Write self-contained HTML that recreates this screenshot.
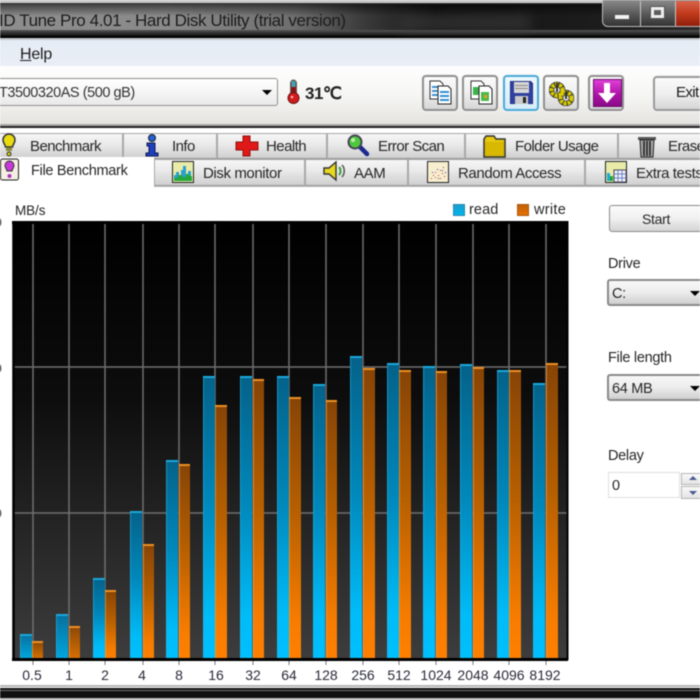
<!DOCTYPE html>
<html><head><meta charset="utf-8">
<style>
html,body{margin:0;padding:0;background:#fff}
#r{position:relative;width:700px;height:700px;overflow:hidden;background:#fff;font-family:"Liberation Sans",sans-serif;color:#222;font-size:15px;filter:blur(.45px)}
.a{position:absolute}
.t{position:absolute;white-space:nowrap;line-height:18px;font-size:15px;color:#262626;letter-spacing:-.55px}
.t2{letter-spacing:-.4px}
.tab{position:absolute;box-sizing:border-box;background:linear-gradient(#f6f6f6,#e9e9e9 45%,#cfcfcf);border:1px solid #a8a8a8;border-bottom:1px solid #999}
.btn{position:absolute;box-sizing:border-box;top:75px;width:36px;height:36px;border:2px solid #8f8f8f;border-radius:4px;background:linear-gradient(#fbfbfb,#efefef 50%,#d6d6d6);box-shadow:0 0 0 1px #f4f4f4}
.combo{position:absolute;box-sizing:border-box;border:2px solid #8a8a8a;border-radius:3px;background:linear-gradient(#f8f8f8,#ececec 50%,#cfcfcf)}
.arr{position:absolute;width:0;height:0;border-left:5px solid transparent;border-right:5px solid transparent;border-top:5px solid #000}
</style></head><body><div id="r">

<!-- title bar -->
<div class="a" style="left:0;top:0;width:700px;height:38px;background:linear-gradient(90deg,#8d8d8d 0,#8a8a8a 24%,#6e6e6e 42%,#3a3a3a 52%,#151515 62%,#1c1c1c 85%,#2a2a2a 100%)"></div>
<div class="a" style="left:0;top:4px;width:700px;height:12px;background:linear-gradient(rgba(0,0,0,.55),rgba(0,0,0,0))"></div>
<div class="a" style="left:0;top:0;width:700px;height:3px;background:#c9c9c9"></div>
<div class="a" style="left:0;top:3px;width:700px;height:1px;background:#333"></div>
<div class="a" style="left:0;top:30px;width:700px;height:6px;background:linear-gradient(#555,#111)"></div>
<div class="a" style="left:0;top:36px;width:700px;height:2px;background:#000"></div>
<div class="a" style="left:0;top:38px;width:700px;height:2px;background:#c4c8cc"></div>
<div class="a" style="left:400px;top:16px;width:130px;height:14px;background:#3c3c3c;filter:blur(6px);opacity:.7"></div>
<div class="t" style="left:-1px;top:11px;font-size:17px;line-height:20px;color:#1c1c1c;letter-spacing:-.4px">ID Tune Pro 4.01 - Hard Disk Utility (trial version)</div>
<!-- window buttons -->
<div class="a" style="left:602px;top:0;width:98px;height:27px;box-sizing:border-box;border:1px solid #bdbdbd;border-top:0;border-radius:0 0 0 6px;background:linear-gradient(#8b8b8b,#5d5d5d 50%,#333)"></div>
<div class="a" style="left:640px;top:1px;width:1px;height:25px;background:#c8c8c8"></div>
<div class="a" style="left:675px;top:1px;width:1px;height:25px;background:#c8c8c8"></div>
<div class="a" style="left:676px;top:1px;width:24px;height:25px;background:linear-gradient(#d8654c,#c23a1c 50%,#8e1f0a)"></div>
<div class="a" style="left:615px;top:15px;width:14px;height:4px;background:#f2f2f2"></div>
<div class="a" style="left:651px;top:7px;width:13px;height:11px;box-sizing:border-box;border:3px solid #eee;outline:1px solid #555"></div>

<!-- menu -->
<div class="a" style="left:0;top:40px;width:700px;height:26px;background:linear-gradient(#e6ecf5,#e9eef6)"></div>
<div class="t" style="left:20px;top:45px;font-size:16px;line-height:19px;color:#1c1c1c;letter-spacing:-.2px"><u>H</u>elp</div>

<!-- toolbar -->
<div class="a" style="left:0;top:66px;width:700px;height:58px;background:linear-gradient(#fefefe,#f6f6f4 50%,#e4e3df)"></div>
<div class="a" style="left:0;top:124px;width:700px;height:2px;background:#a9a9a9"></div>
<div class="a" style="left:0;top:126px;width:700px;height:2px;background:#222"></div>
<div class="a" style="left:0;top:128px;width:700px;height:572px;background:#fff"></div>
<div class="a" style="left:-4px;top:78px;width:282px;height:28px;box-sizing:border-box;border:1px solid #8f8f8f;border-radius:3px;background:linear-gradient(#fff,#f5f5f5 50%,#e9e9e9)"></div>
<div class="t" style="left:-1px;top:84px;font-size:14.5px;color:#333;letter-spacing:-.45px">T3500320AS (500 gB)</div>
<div class="arr" style="left:262px;top:90px"></div>
<!-- thermometer -->
<svg class="a" style="left:286px;top:79px" width="16" height="26" viewBox="0 0 16 26"><rect x="4.500" y="1" width="6" height="18" rx="3" fill="#8a1414" stroke="#666"/><rect x="5.500" y="2" width="4" height="6" fill="#3aa6b5"/><circle cx="7.500" cy="19" r="5.500" fill="#d31c1c" stroke="#6a1010"/><circle cx="6" cy="18" r="1.300" fill="#f6b0b0"/></svg>
<div class="t" style="left:305px;top:85px;font-size:17px;font-weight:bold;color:#222;letter-spacing:-.5px">31℃</div>

<!-- toolbar buttons -->
<div class="btn" style="left:422px"></div>
<div class="btn" style="left:462px"></div>
<div class="btn" style="left:503px;border-color:#4aa9d8;background:linear-gradient(#eef8fd,#d5ecf8)"></div>
<div class="btn" style="left:543px"></div>
<div class="btn" style="left:588px"></div>
<div class="btn" style="left:653px;width:60px;height:35px;top:76px;border-width:2px;border-color:#999"></div>
<div class="t" style="left:676px;top:84px;font-size:15px;color:#1a1a1a;letter-spacing:-.6px">Exit</div>
<svg class="a" style="left:429px;top:80px" width="24" height="26" viewBox="0 0 24 26">
<path d="M1 1h10l3 3v15H1z" fill="#fff" stroke="#333"/><rect x="3" y="6" width="7" height="2" fill="#3a8fd0"/><rect x="3" y="10" width="7" height="2" fill="#3a8fd0"/><rect x="3" y="14" width="7" height="2" fill="#3a8fd0"/>
<path d="M9 6h10l3 3v15H9z" fill="#fff" stroke="#222"/><rect x="11" y="11" width="9" height="2" fill="#2f8fd6"/><rect x="11" y="15" width="9" height="2" fill="#2f8fd6"/><rect x="11" y="19" width="9" height="2" fill="#2f8fd6"/></svg>
<svg class="a" style="left:470px;top:80px" width="24" height="26" viewBox="0 0 24 26">
<path d="M1 1h10l3 3v15H1z" fill="#fff" stroke="#333"/><rect x="3" y="7" width="8" height="8" fill="#39b54a"/>
<path d="M9 6h10l3 3v15H9z" fill="#fff" stroke="#222"/><rect x="11" y="12" width="8" height="9" fill="#4db84a"/><rect x="14" y="15" width="3" height="3" fill="#e8a028"/></svg>
<svg class="a" style="left:510px;top:81px" width="23" height="23" viewBox="0 0 23 23"><path d="M0 0h20l3 3v20H0z" fill="#2f3f9e" stroke="#1a2266"/><rect x="4" y="1" width="15" height="11" fill="#d8d8d8"/><rect x="5" y="4" width="13" height="1" fill="#888"/><rect x="5" y="7" width="13" height="1" fill="#888"/><rect x="5" y="15" width="13" height="8" fill="#c9c9c9"/><rect x="13" y="16" width="3" height="6" fill="#222"/></svg>
<svg class="a" style="left:549px;top:81px" width="25" height="25" viewBox="0 0 25 25"><circle cx="8" cy="9" r="5.500" fill="none" stroke="#333" stroke-width="5.500"/><circle cx="17" cy="17" r="5.500" fill="none" stroke="#333" stroke-width="5.500"/><circle cx="8" cy="9" r="5.500" fill="none" stroke="#d8cc00" stroke-width="4" stroke-dasharray="3 1"/><circle cx="17" cy="17" r="5.500" fill="none" stroke="#d8cc00" stroke-width="4" stroke-dasharray="3 1"/><path d="M8 2v9M17 10v8" stroke="#333" stroke-width="2"/></svg>
<div class="a" style="left:593px;top:79px;width:29px;height:28px;box-sizing:border-box;border:1px solid #6a0c6a;background:linear-gradient(#e040d8,#b012a8 55%,#8a0a88)"></div>
<svg class="a" style="left:596px;top:82px" width="22" height="22" viewBox="0 0 22 22"><path d="M8 1h6v10h6L11 21 2 11h6z" fill="#fff"/></svg>

<!-- tab row 1 -->
<div class="tab" style="left:-2px;top:133px;width:125px;height:26px"></div>
<div class="tab" style="left:123px;top:133px;width:94px;height:26px"></div>
<div class="tab" style="left:217px;top:133px;width:110px;height:26px"></div>
<div class="tab" style="left:327px;top:133px;width:138px;height:26px"></div>
<div class="tab" style="left:465px;top:133px;width:153px;height:26px"></div>
<div class="tab" style="left:618px;top:133px;width:90px;height:26px"></div>
<div class="t" style="left:30px;top:138px">Benchmark</div>
<div class="t" style="left:172px;top:138px">Info</div>
<div class="t" style="left:266px;top:138px">Health</div>
<div class="t" style="left:378px;top:138px">Error Scan</div>
<div class="t" style="left:515px;top:138px">Folder Usage</div>
<div class="t" style="left:668px;top:138px">Erase</div>
<!-- row 1 icons -->
<svg class="a" style="left:2px;top:133px" width="16" height="24" viewBox="0 0 16 24"><path d="M7 1a6 6 0 0 1 6 6c0 3-2 4-2.500 7h-7C3 11 1 10 1 7a6 6 0 0 1 6-6z" fill="#e8dc10" stroke="#333" stroke-width="1.500"/><rect x="4" y="15" width="6" height="3" fill="#8a8a30"/><circle cx="7" cy="21" r="2" fill="#d8c810" stroke="#333"/></svg>
<svg class="a" style="left:144px;top:134px" width="16" height="24" viewBox="0 0 16 24"><circle cx="8" cy="4" r="3.500" fill="#2a5fd0" stroke="#123"/><path d="M3 9h8v10h3v3H2v-3h3v-7H3z" fill="#1f3fc0" stroke="#0a1a50"/></svg>
<svg class="a" style="left:235px;top:135px" width="24" height="22" viewBox="0 0 24 22"><path d="M8 1h7v6h8v8h-8v6H8v-6H1V7h7z" fill="#e01818" stroke="#901010"/></svg>
<svg class="a" style="left:346px;top:133px" width="24" height="24" viewBox="0 0 24 24"><path d="M14 14l7 7" stroke="#1a2a90" stroke-width="4.500" stroke-linecap="round"/><circle cx="9" cy="9" r="6.500" fill="#4fc840" stroke="#445" stroke-width="2"/><circle cx="7" cy="7" r="2" fill="#bdf0a8"/></svg>
<svg class="a" style="left:483px;top:135px" width="24" height="23" viewBox="0 0 24 23"><path d="M1 4l2-3h8l2 3h9v18H1z" fill="#e6c80c" stroke="#333" stroke-width="1.500"/><rect x="2" y="7" width="19" height="14" fill="#d8b800"/></svg>
<svg class="a" style="left:637px;top:134px" width="20" height="24" viewBox="0 0 20 24"><rect x="1" y="3" width="18" height="3" fill="#555"/><path d="M3 6h14l-1 17H4z" fill="#a8a8a8" stroke="#222"/><path d="M7 7v15M10 7v15M13 7v15" stroke="#222" stroke-width="1.600"/></svg>

<!-- tab row 2 -->
<div class="a" style="left:0;top:186px;width:700px;height:1px;background:#b8b8b8"></div>
<div class="tab" style="left:154px;top:159px;width:151px;height:27px"></div>
<div class="tab" style="left:305px;top:159px;width:103px;height:27px"></div>
<div class="tab" style="left:408px;top:159px;width:177px;height:27px"></div>
<div class="tab" style="left:585px;top:159px;width:125px;height:27px"></div>
<div class="a" style="left:-2px;top:157px;width:156px;height:31px;background:#fff"></div>
<div class="t" style="left:31px;top:162px;font-size:14.500px;letter-spacing:-.3px">File Benchmark</div>
<div class="t t2" style="left:203px;top:165px">Disk monitor</div>
<div class="t t2" style="left:354px;top:165px">AAM</div>
<div class="t t2" style="left:458px;top:165px">Random Access</div>
<div class="t t2" style="left:636px;top:165px">Extra tests</div>
<svg class="a" style="left:0;top:158px" width="20" height="24" viewBox="0 0 20 24"><rect x=".5" y="1" width="18" height="21" rx="2" fill="#f4efe2" stroke="#222"/><path d="M9.500 3a4.500 4.500 0 0 1 4.500 4.500c0 2-1.500 3-2 5.500h-5c-.5-2.500-2-3.500-2-5.500A4.500 4.500 0 0 1 9.500 3z" fill="#c838d8" stroke="#333"/><circle cx="9.500" cy="18" r="2" fill="#b030c8"/></svg>
<svg class="a" style="left:172px;top:161px" width="22" height="22" viewBox="0 0 22 22"><rect x=".5" y=".5" width="21" height="21" fill="#e8eca8" stroke="#222"/><path d="M2 20v-6h2v-3h3v5h2v-7h2V5h3v8h2v-3h3v10z" fill="#2a9fd0"/><path d="M2 20v-3h4v-3h4v2h4v-3h3v2h3v5z" fill="#22a838"/></svg>
<svg class="a" style="left:323px;top:160px" width="24" height="22" viewBox="0 0 24 22"><path d="M1 8h5l7-6v18l-7-6H1z" fill="#e8d820" stroke="#333" stroke-width="1.400"/><path d="M16 7c2 2 2 6 0 8" fill="none" stroke="#38a038" stroke-width="2"/><path d="M19 5c3 3 3 9 0 12" fill="none" stroke="#555" stroke-width="1.500"/></svg>
<svg class="a" style="left:427px;top:161px" width="22" height="22" viewBox="0 0 22 22"><rect x=".5" y=".5" width="21" height="21" fill="#f6eecf" stroke="#222"/><path d="M4 17h1v1H4zM6 14h1v1H6zM8 16h1v1H8zM8 11h1v1H8zM11 14h1v1h-1zM13 9h1v1h-1zM15 12h1v1h-1zM16 6h1v1h-1zM13 17h1v1h-1zM17 15h1v1h-1z" fill="#d03030"/><path d="M5 11h1v1H5zM10 8h1v1h-1zM11 17h1v1h-1zM15 9h1v1h-1zM18 11h1v1h-1z" fill="#3040c0"/></svg>
<svg class="a" style="left:605px;top:161px" width="22" height="22" viewBox="0 0 22 22"><rect x=".5" y=".5" width="21" height="21" fill="#e8eca8" stroke="#222"/><path d="M2 20v-8h3v8z" fill="#1fa8d8"/><path d="M5 20v-5h3v5z" fill="#22a838"/><rect x="9" y="9" width="12" height="12" fill="#f4f4f8" stroke="#445"/><path d="M9 13h12M9 17h12M13 9v12M17 9v12" stroke="#6a80c8"/></svg>

<!-- legend -->
<div class="t" style="left:15px;top:202px;font-size:13.500px;color:#222;letter-spacing:-.1px">MB/s</div>
<div class="a" style="left:453px;top:204px;width:12px;height:12px;box-sizing:border-box;border:1px solid #2a88b0;background:linear-gradient(#1aa0d0,#00b4ec)"></div>
<div class="a" style="left:517px;top:204px;width:12px;height:12px;box-sizing:border-box;border:1px solid #a85a10;background:linear-gradient(#c06008,#e87000)"></div>
<div class="t" style="left:469px;top:201px;font-size:14.500px;letter-spacing:.1px">read</div>
<div class="t" style="left:534px;top:201px;font-size:14.500px;letter-spacing:.3px">write</div>
<div class="t" style="left:-6px;top:213px;font-size:14px;letter-spacing:0">0</div>
<div class="t" style="left:-6px;top:359px;font-size:14px;letter-spacing:0">0</div>
<div class="t" style="left:-6px;top:504px;font-size:14px;letter-spacing:0">0</div>

<!-- chart -->
<svg class="a" style="left:0;top:210px" width="600" height="480" viewBox="0 210 600 480">
<defs>
<linearGradient id="bg" x1="0" y1="0" x2="0" y2="1"><stop offset="0" stop-color="#000"/><stop offset=".4" stop-color="#0d0d0d"/><stop offset="1" stop-color="#3d3d3d"/></linearGradient>
<linearGradient id="rd" x1="0" y1="0" x2="0" y2="1"><stop offset="0" stop-color="#04628a"/><stop offset=".45" stop-color="#0088bb"/><stop offset=".85" stop-color="#00bcf8"/><stop offset="1" stop-color="#00c0ff"/></linearGradient>
<linearGradient id="wr" x1="0" y1="0" x2="0" y2="1"><stop offset="0" stop-color="#874406"/><stop offset=".45" stop-color="#b86000"/><stop offset=".85" stop-color="#f67c00"/><stop offset="1" stop-color="#ff8000"/></linearGradient>
<linearGradient id="rs" x1="0" y1="0" x2="0" y2="1"><stop offset="0" stop-color="#076f9c"/><stop offset="1" stop-color="#00a8e0"/></linearGradient>
<linearGradient id="ws" x1="0" y1="0" x2="0" y2="1"><stop offset="0" stop-color="#8a4808"/><stop offset="1" stop-color="#d87000"/></linearGradient>
</defs>
<rect x="13" y="221" width="555" height="438" fill="url(#bg)"/>
<path d="M13 367H568M13 513H568" stroke="#6f6f6f" stroke-width="1.500"/>
<path d="M33 221V659M69 221V659M105 221V659M143 221V659M179 221V659M215 221V659M253 221V659M289 221V659M326 221V659M363 221V659M399 221V659M436 221V659M473 221V659M509 221V659M546 221V659" stroke="#6f6f6f" stroke-width="1.500"/>
<g>
<rect x="20" y="634" width="12" height="25" fill="url(#rs)"/><rect x="32" y="641" width="11" height="18" fill="url(#ws)"/>
<rect x="56" y="614" width="12" height="45" fill="url(#rs)"/><rect x="69" y="626" width="11" height="33" fill="url(#ws)"/>
<rect x="93" y="578" width="12" height="81" fill="url(#rd)"/><rect x="105" y="590" width="11" height="69" fill="url(#wr)"/>
<rect x="130" y="511" width="12" height="148" fill="url(#rd)"/><rect x="143" y="544" width="11" height="115" fill="url(#wr)"/>
<rect x="166" y="460" width="12" height="199" fill="url(#rd)"/><rect x="179" y="464" width="11" height="195" fill="url(#wr)"/>
<rect x="203" y="376" width="12" height="283" fill="url(#rd)"/><rect x="215" y="405" width="12" height="254" fill="url(#wr)"/>
<rect x="240" y="376" width="12" height="283" fill="url(#rd)"/><rect x="253" y="379" width="11" height="280" fill="url(#wr)"/>
<rect x="277" y="376" width="12" height="283" fill="url(#rd)"/><rect x="289" y="397" width="12" height="262" fill="url(#wr)"/>
<rect x="313" y="384" width="12" height="275" fill="url(#rd)"/><rect x="326" y="400" width="11" height="259" fill="url(#wr)"/>
<rect x="350" y="356" width="12" height="303" fill="url(#rd)"/><rect x="363" y="368" width="12" height="291" fill="url(#wr)"/>
<rect x="387" y="363" width="12" height="296" fill="url(#rd)"/><rect x="399" y="370" width="12" height="289" fill="url(#wr)"/>
<rect x="423" y="366" width="12" height="293" fill="url(#rd)"/><rect x="436" y="371" width="11" height="288" fill="url(#wr)"/>
<rect x="460" y="364" width="12" height="295" fill="url(#rd)"/><rect x="473" y="367" width="11" height="292" fill="url(#wr)"/>
<rect x="497" y="370" width="12" height="289" fill="url(#rd)"/><rect x="509" y="370" width="12" height="289" fill="url(#wr)"/>
<rect x="533" y="383" width="12" height="276" fill="url(#rd)"/><rect x="546" y="363" width="12" height="296" fill="url(#wr)"/>
</g>
<g fill="#1aa8dc">
<rect x="20" y="634" width="12" height="2"/><rect x="56" y="614" width="12" height="2"/><rect x="93" y="578" width="12" height="2"/><rect x="130" y="511" width="12" height="2"/><rect x="166" y="460" width="12" height="2"/><rect x="203" y="376" width="12" height="2"/><rect x="240" y="376" width="12" height="2"/><rect x="277" y="376" width="12" height="2"/><rect x="313" y="384" width="12" height="2"/><rect x="350" y="356" width="12" height="2"/><rect x="387" y="363" width="12" height="2"/><rect x="423" y="366" width="12" height="2"/><rect x="460" y="364" width="12" height="2"/><rect x="497" y="370" width="12" height="2"/><rect x="533" y="383" width="12" height="2"/>
</g>
<g fill="#ee8f22">
<rect x="32" y="641" width="11" height="2"/><rect x="69" y="626" width="11" height="2"/><rect x="105" y="590" width="11" height="2"/><rect x="143" y="544" width="11" height="2"/><rect x="179" y="464" width="11" height="2"/><rect x="215" y="405" width="12" height="2"/><rect x="253" y="379" width="11" height="2"/><rect x="289" y="397" width="12" height="2"/><rect x="326" y="400" width="11" height="2"/><rect x="363" y="368" width="12" height="2"/><rect x="399" y="370" width="12" height="2"/><rect x="436" y="371" width="11" height="2"/><rect x="473" y="367" width="11" height="2"/><rect x="509" y="370" width="12" height="2"/><rect x="546" y="363" width="12" height="2"/>
</g>
<!-- bar edge highlights -->
<path d="M20.500 634V659M56.500 614V659M93.500 578V659M130.500 511V659M166.500 460V659M203.500 376V659M240.500 376V659M277.500 376V659M313.500 384V659M350.500 356V659M387.500 363V659M423.500 366V659M460.500 364V659M497.500 370V659M533.500 383V659" stroke="#28b4e4" stroke-opacity=".55"/>
<path d="M32.500 641V659M69.500 626V659M105.500 590V659M143.500 544V659M179.500 464V659M215.500 405V659M253.500 379V659M289.500 397V659M326.500 400V659M363.500 368V659M399.500 370V659M436.500 371V659M473.500 367V659M509.500 370V659M546.500 363V659" stroke="#f0a040" stroke-opacity=".6"/>
<g fill="none" stroke="#000">
<path d="M12 222.500H568" stroke-width="3"/><path d="M12 659.500H568" stroke-width="3"/><path d="M13.500 221V660" stroke-width="2.500"/><path d="M567.500 221V660" stroke-width="2"/>
</g>
<path d="M33 661V665M69 661V665M105 661V665M143 661V665M179 661V665M215 661V665M253 661V665M289 661V665M326 661V665M363 661V665M399 661V665M436 661V665M473 661V665M509 661V665M546 661V665" stroke="#777"/>
<g font-family="Liberation Sans, sans-serif" font-size="14" fill="#2a2a3a" text-anchor="middle">
<text x="32" y="680">0.5</text><text x="69" y="680">1</text><text x="105" y="680">2</text><text x="142" y="680">4</text><text x="179" y="680">8</text><text x="216" y="680">16</text><text x="253" y="680">32</text><text x="289" y="680">64</text><text x="326" y="680">128</text><text x="363" y="680">256</text><text x="399" y="680">512</text><text x="436" y="680">1024</text><text x="473" y="680">2048</text><text x="509" y="680">4096</text><text x="545" y="680">8192</text>
</g>
</svg>

<!-- right panel -->
<div class="a" style="left:609px;top:205px;width:110px;height:27px;box-sizing:border-box;border:1px solid #8a8a8a;border-radius:3px;background:linear-gradient(#fbfbfb,#f0f0f0 50%,#d4d4d4)"></div>
<div class="t" style="left:642px;top:210px;font-size:14px;letter-spacing:-.3px">Start</div>
<div class="t" style="left:608px;top:255px;font-size:14.500px;letter-spacing:-.3px">Drive</div>
<div class="combo" style="left:607px;top:279px;width:110px;height:27px"></div>
<div class="t" style="left:612px;top:285px;font-size:14.500px;letter-spacing:-.3px">C:</div>
<div class="arr" style="left:690px;top:291px"></div>
<div class="t" style="left:608px;top:349px;font-size:14.500px;letter-spacing:-.3px">File length</div>
<div class="combo" style="left:607px;top:374px;width:110px;height:27px"></div>
<div class="t" style="left:612px;top:380px;font-size:14.500px;letter-spacing:-.3px">64 MB</div>
<div class="arr" style="left:690px;top:386px"></div>
<div class="t" style="left:608px;top:447px;font-size:14.500px;letter-spacing:-.3px">Delay</div>
<div class="a" style="left:608px;top:472px;width:72px;height:26px;box-sizing:border-box;border:1px solid #e0e0e0;background:#fff"></div>
<div class="t" style="left:612px;top:477px;font-size:14.500px">0</div>
<div class="a" style="left:681px;top:473px;width:25px;height:12px;box-sizing:border-box;border:1px solid #b4b4b4;background:linear-gradient(#fafafa,#e4e4e4)"></div>
<div class="a" style="left:681px;top:486px;width:25px;height:13px;box-sizing:border-box;border:1px solid #b4b4b4;background:linear-gradient(#fafafa,#e4e4e4)"></div>
<div class="a" style="left:689px;top:476px;width:0;height:0;border-left:4px solid transparent;border-right:4px solid transparent;border-bottom:4px solid #4a5a90"></div>
<div class="a" style="left:689px;top:491px;width:0;height:0;border-left:4px solid transparent;border-right:4px solid transparent;border-top:4px solid #4a5a90"></div>

<!-- bottom -->
<div class="a" style="left:0;top:685px;width:700px;height:15px;background:#111"></div>
<div class="a" style="left:0;top:685px;width:700px;height:2px;background:#b4b4b4"></div>
<div class="a" style="left:0;top:687px;width:700px;height:1px;background:#fff"></div>
<div class="a" style="left:0;top:690px;width:700px;height:1px;background:#777"></div>
<div class="a" style="left:0;top:698px;width:700px;height:2px;background:#bdbdbd"></div>
</div></body></html>
